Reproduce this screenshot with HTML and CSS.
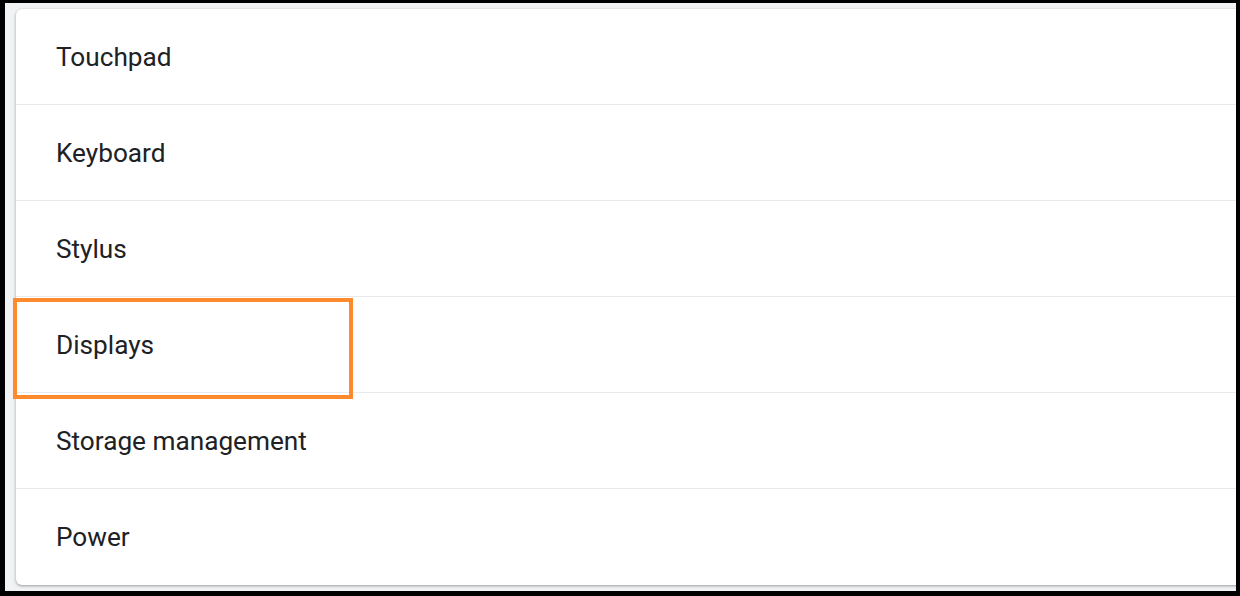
FILE: index.html
```html
<!DOCTYPE html>
<html>
<head>
<meta charset="utf-8">
<link rel="stylesheet" href="styles.css">
</head>
<body>
<div class="frame">
  <div class="card">
    <div class="row">Touchpad</div>
    <div class="row">Keyboard</div>
    <div class="row">Stylus</div>
    <div class="row">Displays</div>
    <div class="row">Storage management</div>
    <div class="row last">Power</div>
  </div>
  <div class="highlight"></div>
</div>
</body>
</html>
```
FILE: styles.css
```css
html, body {
  margin: 0;
  padding: 0;
  background: #000;
  width: 1240px;
  height: 596px;
  overflow: hidden;
}
.frame {
  position: relative;
  margin: 3px 4px 0 5px;
  height: 588px;
  background: #f1f3f4;
  padding: 6px 0 0 11px;
  box-sizing: border-box;
  overflow: hidden;
}
.card {
  width: 1240px;
  background: #fff;
  border-radius: 6px;
  box-shadow: 0 1px 2px rgba(60,64,67,0.3), 0 1px 3px 1px rgba(60,64,67,0.15);
}
.row {
  height: 96px;
  box-sizing: border-box;
  border-bottom: 1px solid #e8eaed;
  display: flex;
  align-items: center;
  padding-left: 40px;
  font-family: Roboto, "Liberation Sans", sans-serif;
  font-size: 26.2px;
  color: #202124;
}
.row.last {
  border-bottom: none;
}
.highlight {
  position: absolute;
  left: 8px;
  top: 295px;
  width: 340px;
  height: 101px;
  box-sizing: border-box;
  border: 4px solid #fd8a2c;
}
```
